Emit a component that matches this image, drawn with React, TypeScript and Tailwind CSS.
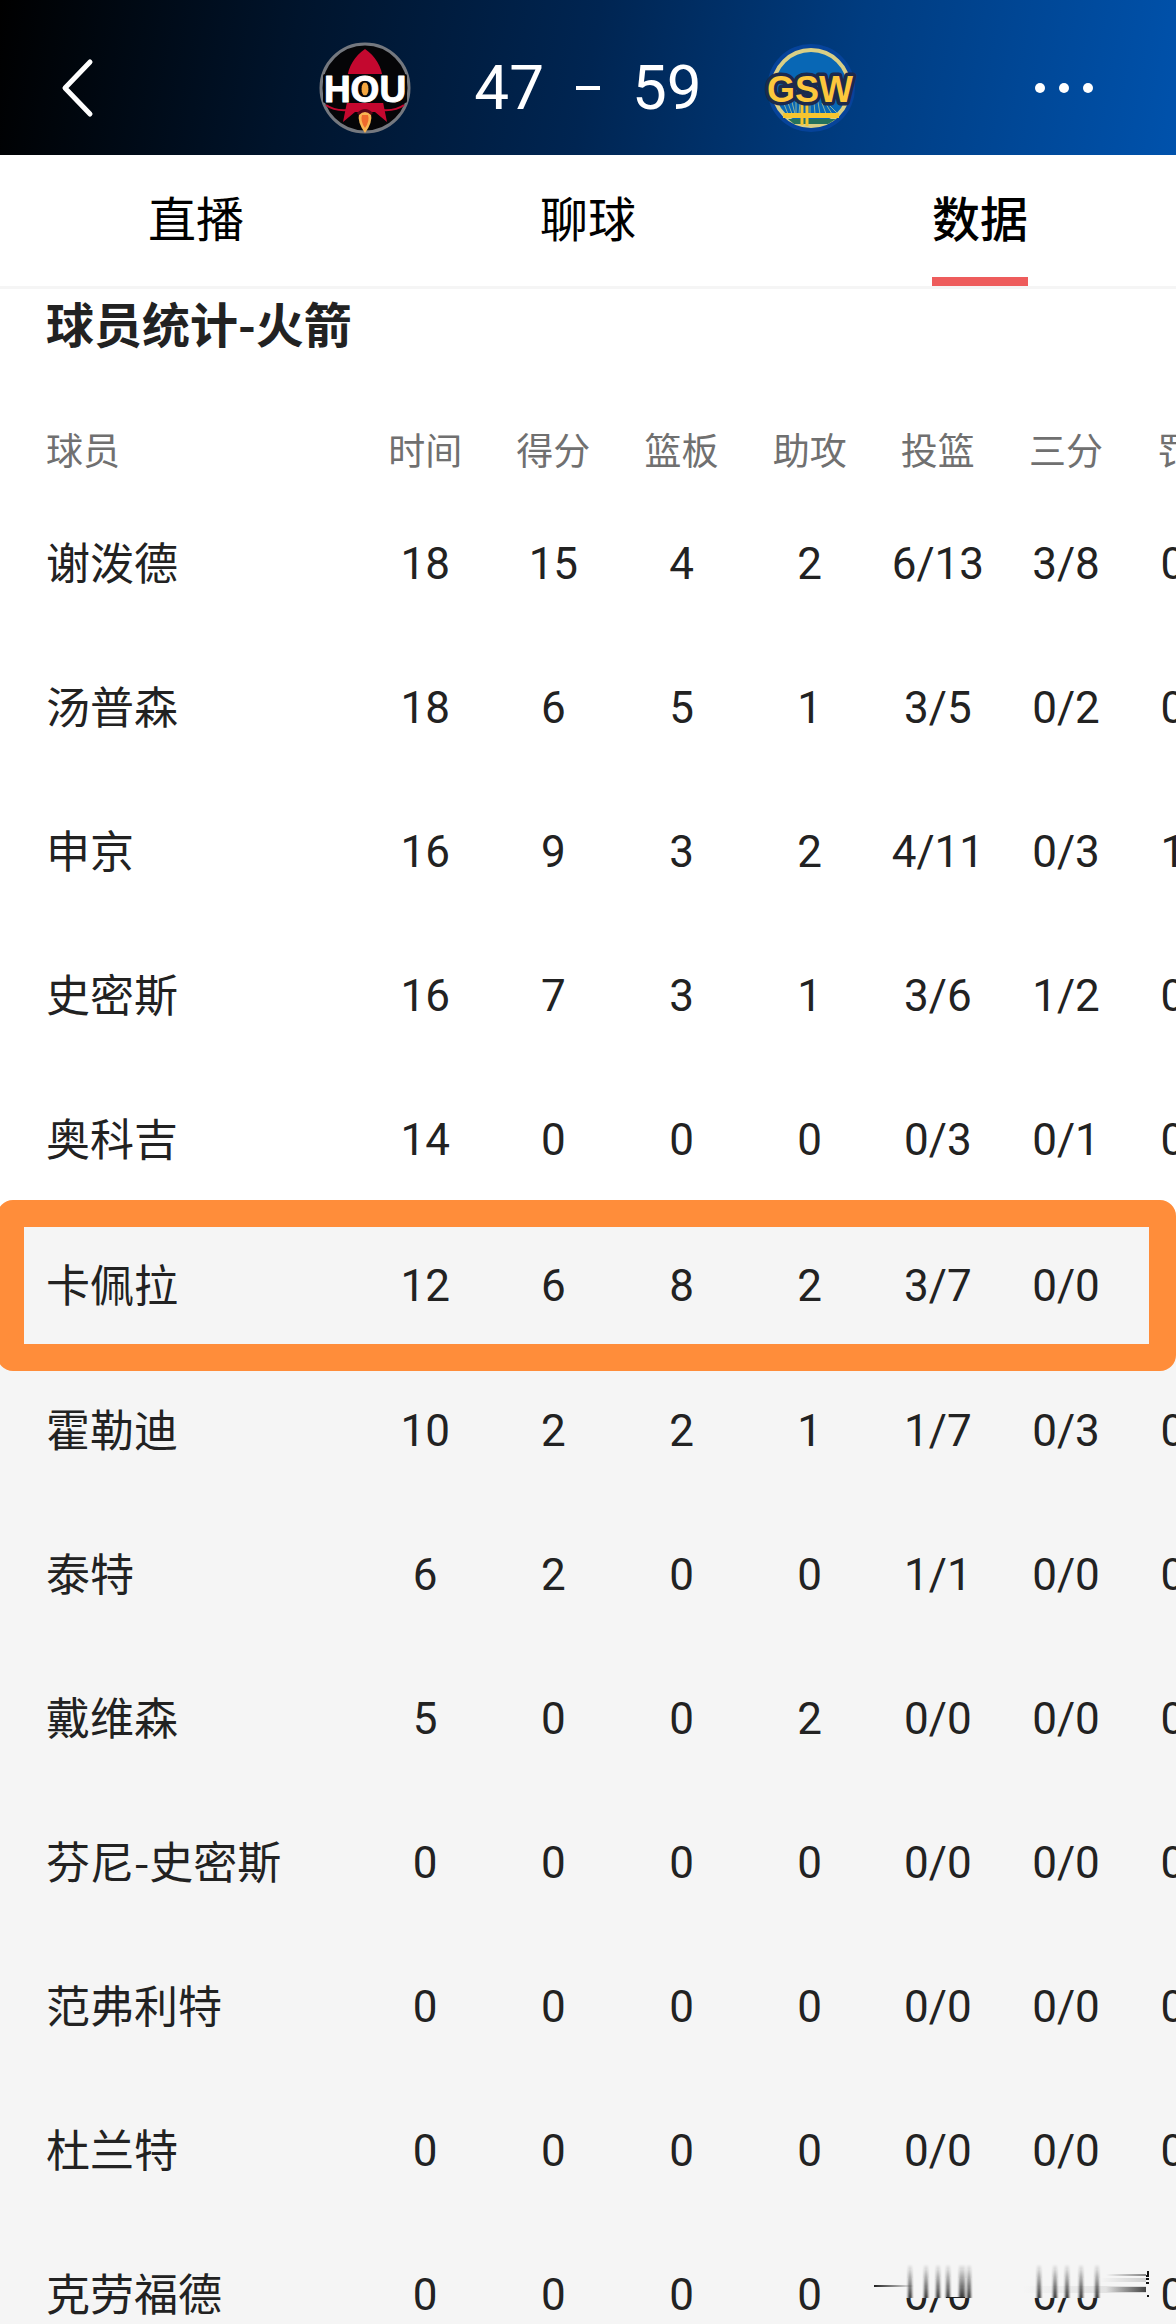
import { useState } from 'react';

interface Player {
  name: string;
  stats: string[];
  marked?: boolean;
}

const columns = ['时间', '得分', '篮板', '助攻', '投篮', '三分', '罚球'];

const onCourt: Player[] = [
  { name: '谢泼德', stats: ['18', '15', '4', '2', '6/13', '3/8', '0/0'] },
  { name: '汤普森', stats: ['18', '6', '5', '1', '3/5', '0/2', '0/0'] },
  { name: '申京', stats: ['16', '9', '3', '2', '4/11', '0/3', '1/2'] },
  { name: '史密斯', stats: ['16', '7', '3', '1', '3/6', '1/2', '0/0'] },
  { name: '奥科吉', stats: ['14', '0', '0', '0', '0/3', '0/1', '0/0'] }
];

const bench: Player[] = [
  { name: '卡佩拉', stats: ['12', '6', '8', '2', '3/7', '0/0', '0/0'], marked: true },
  { name: '霍勒迪', stats: ['10', '2', '2', '1', '1/7', '0/3', '0/0'] },
  { name: '泰特', stats: ['6', '2', '0', '0', '1/1', '0/0', '0/0'] },
  { name: '戴维森', stats: ['5', '0', '0', '2', '0/0', '0/0', '0/0'] },
  { name: '芬尼-史密斯', stats: ['0', '0', '0', '0', '0/0', '0/0', '0/0'] },
  { name: '范弗利特', stats: ['0', '0', '0', '0', '0/0', '0/0', '0/0'] },
  { name: '杜兰特', stats: ['0', '0', '0', '0', '0/0', '0/0', '0/0'] },
  { name: '克劳福德', stats: ['0', '0', '0', '0', '0/0', '0/0', '0/0'] }
];

const RocketsLogo = () => (
  <svg width="90" height="92" viewBox="0 0 90 92" className="overflow-visible">
    <circle cx="45" cy="46" r="44" fill="#050507" stroke="#74787f" strokeWidth="3" />
    <path d="M45 7C35 14 28 24 27 38V60L23 80L35 70H55L67 80L63 60V38C62 24 55 14 45 7Z" fill="#c4082f" />
    <path d="M6 63Q14 69 28 68M84 63Q76 69 62 68" fill="none" stroke="#c4082f" strokeWidth="2" />
    <path d="M39 72Q45 66 51 72Q53 80 45 91Q37 80 39 72Z" fill="#f9b552" />
    <path d="M42 73H48Q50 79 45 86Q40 79 42 73Z" fill="#ef6a2d" />
    <path d="M38 72Q45 65 52 72" fill="none" stroke="#5b0718" strokeWidth="3" />
    <g
      textAnchor="middle"
      className="font-['Liberation_Sans',sans-serif] text-[37px] font-bold"
      strokeLinejoin="round"
      paintOrder="stroke"
    >
      <rect x="3" y="32" width="84" height="29" rx="2" fill="#050507" />
      <text x="45" y="60" fill="#fff" stroke="#fff" strokeWidth="1">HOU</text>
    </g>
    <ellipse cx="45" cy="47" rx="4" ry="7" fill="#f4a640" stroke="#050507" strokeWidth="1" />
  </svg>
);

const WarriorsLogo = () => (
  <svg width="90" height="92" viewBox="0 0 90 92" className="overflow-visible">
    <circle cx="45" cy="46" r="44" fill="#06439a" />
    <circle cx="45" cy="46" r="38" fill="#0867b5" stroke="#d9cf86" strokeWidth="4" />
    <path
      d="M18 62L22 72M22 61L26 72M26 60L29 72M30 60V72M34 60L33 72M44 60V72M48 60L49 72M52 60L54 72M56 61L60 72M60 62L66 72M64 64L72 72"
      stroke="#8fb39a"
      strokeWidth="1"
    />
    <path d="M22 77H70L62 82H28Z" fill="#24725c" />
    <path d="M17 71H73V76H17Z" fill="#f6c52f" />
    <path d="M36 58V83M41 58V84" stroke="#f6c52f" strokeWidth="3" />
    <text
      x="44"
      y="60"
      textAnchor="middle"
      className="font-['Liberation_Sans',sans-serif] text-[36px] font-bold"
      fill="#fdc73c"
      stroke="#1c2a4d"
      strokeWidth="7"
      strokeLinejoin="round"
      paintOrder="stroke"
    >
      GSW
    </text>
  </svg>
);

const Header = () => (
  <header className="grid h-[155px] shrink-0 grid-cols-[1fr_auto_1fr] items-center bg-[linear-gradient(100deg,#000_0%,#00142c_25%,#002552_50%,#003c80_72%,#0052ac_100%)] pt-5 text-white">
    <button type="button" aria-label="返回" className="ml-[60px] justify-self-start">
      <svg width="36" height="60" viewBox="0 0 36 60" fill="none" stroke="currentColor" strokeWidth="5" strokeLinecap="round" strokeLinejoin="round">
        <path d="M30 4L5 30L30 56" />
      </svg>
    </button>
    <div className="flex items-center gap-16">
      <RocketsLogo />
      <div className="flex items-center gap-8 font-[Roboto,sans-serif] text-[62px] leading-none">
        <span>47</span>
        <span className="h-1 w-6 bg-white" />
        <span>59</span>
      </div>
      <WarriorsLogo />
    </div>
    <button type="button" aria-label="更多" className="mr-[82px] justify-self-end">
      <svg width="60" height="20" viewBox="0 0 60 20" fill="currentColor">
        <circle cx="6" cy="10" r="5" />
        <circle cx="30" cy="10" r="5" />
        <circle cx="54" cy="10" r="5" />
      </svg>
    </button>
  </header>
);

const Tabs = () => {
  const [active, setActive] = useState('数据');

  return (
    <nav className="flex h-[134px] shrink-0 border-b-[3px] border-[#f5f5f5] text-5xl text-black">
      {['直播', '聊球', '数据'].map((tab) => (
        <div key={tab} className="flex flex-1 justify-center">
          <button
            type="button"
            onClick={() => setActive(tab)}
            className={`h-full border-b-[9px] ${active === tab ? 'border-[#ee5c5c] font-medium' : 'border-transparent font-normal'}`}
          >
            {tab}
          </button>
        </div>
      ))}
    </nav>
  );
};

const PlayerRow = ({ name, stats, marked }: Player) => (
  <tr className={marked ? 'relative h-[147px]' : 'h-36'}>
    <th scope="row" className="pb-1.5 pl-[46px] text-left font-normal whitespace-nowrap">
      {name}
      {marked && (
        <div className="absolute -top-3 -bottom-3 -left-[3px] w-[calc(100vw+3px)] rounded-[16px] border-[27px] border-[#ff8d3a]" />
      )}
    </th>
    {stats.map((value, index) => (
      <td key={index} className="text-center font-[Roboto,sans-serif]">
        {value}
      </td>
    ))}
  </tr>
);

// streaks left over the shooting columns at the bottom edge
const Smudge = () => (
  <svg width="284" height="40" viewBox="0 0 284 40" className="absolute right-5 bottom-6">
    <defs>
      <linearGradient id="down" x1="0" y1="0" x2="0" y2="1">
        <stop offset="0" stopColor="#222" stopOpacity="0" />
        <stop offset="0.5" stopColor="#222" stopOpacity="0.45" />
        <stop offset="1" stopColor="#222" stopOpacity="0.9" />
      </linearGradient>
      <linearGradient id="right" x1="0" y1="0" x2="1" y2="0">
        <stop offset="0" stopColor="#222" stopOpacity="0" />
        <stop offset="1" stopColor="#222" stopOpacity="0.9" />
      </linearGradient>
      <linearGradient id="left" x1="0" y1="0" x2="1" y2="0">
        <stop offset="0" stopColor="#222" />
        <stop offset="1" stopColor="#222" stopOpacity="0" />
      </linearGradient>
      <filter id="soft">
        <feGaussianBlur stdDeviation="1 0" />
      </filter>
    </defs>
    <rect width="284" height="38" fill="#f5f5f5" />
    <g fill="url(#down)" filter="url(#soft)">
      <rect x="36" y="4" width="4" height="34" />
      <rect x="52" y="4" width="4" height="34" />
      <rect x="64" y="4" width="4" height="34" />
      <rect x="74" y="4" width="4" height="34" />
      <rect x="87" y="4" width="6" height="34" />
      <rect x="95" y="4" width="4" height="34" />
      <rect x="165" y="4" width="4" height="34" />
      <rect x="181" y="4" width="4" height="34" />
      <rect x="193" y="4" width="4" height="34" />
      <rect x="207" y="4" width="4" height="34" />
      <rect x="223" y="4" width="4" height="34" />
    </g>
    <rect x="74" y="37" width="19" height="1" fill="#222" />
    <rect x="2" y="25" width="40" height="2" fill="url(#left)" />
    <rect x="234" y="14" width="40" height="2" fill="url(#right)" opacity="0.6" />
    <rect x="228" y="18" width="46" height="4" fill="url(#right)" opacity="0.2" />
    <rect x="150" y="26" width="124" height="7" fill="url(#right)" opacity="0.15" />
    <rect x="234" y="27" width="40" height="5" fill="url(#right)" opacity="0.9" />
    <path d="M274 16H276V11M274 19H277M274 23H277M275 36H277" fill="none" stroke="#111" strokeWidth="2" />
  </svg>
);

export default function App() {
  return (
    <div className="relative flex h-screen flex-col overflow-hidden bg-white font-['Noto_Sans_CJK_SC',sans-serif] text-[#222]">
      <Header />
      <Tabs />
      <main className="flex-1 overflow-hidden">
        <h2 className="pb-[55px] pl-[46px] text-5xl leading-[66px] font-bold">球员统计-火箭</h2>
        <table className="w-[107%] table-fixed border-collapse text-[44px] leading-none">
          <thead>
            <tr className="h-[82px] text-[37px] text-[#707070]">
              <th scope="col" className="w-[28.7%] pb-1 pl-[46px] text-left font-normal">球员</th>
              {columns.map((column) => (
                <th key={column} scope="col" className="pb-1 font-normal whitespace-nowrap">{column}</th>
              ))}
            </tr>
          </thead>
          <tbody>
            {onCourt.map((player) => (
              <PlayerRow key={player.name} {...player} />
            ))}
          </tbody>
          <tbody className="bg-[#f5f5f5]">
            {bench.map((player) => (
              <PlayerRow key={player.name} {...player} />
            ))}
          </tbody>
        </table>
      </main>
      <Smudge />
    </div>
  );
}
